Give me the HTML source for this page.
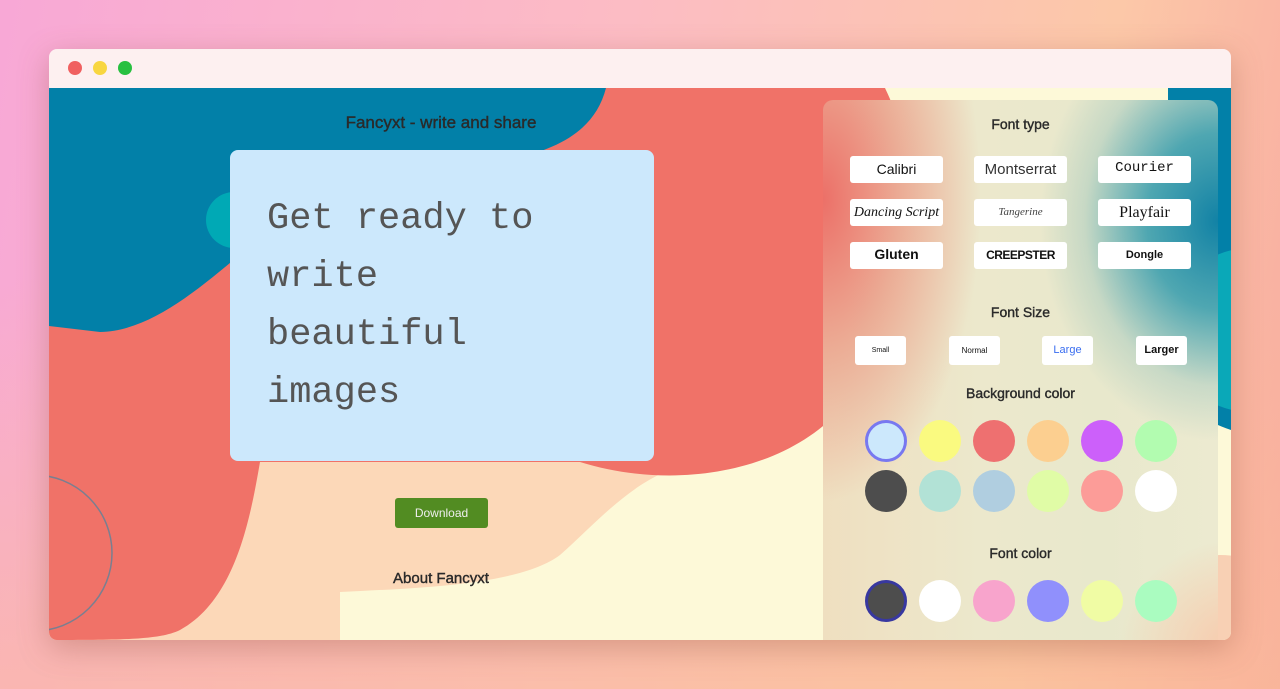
<!DOCTYPE html>
<html><head><meta charset="utf-8"><style>
*{margin:0;padding:0;box-sizing:border-box}
html,body{width:1280px;height:689px;overflow:hidden}
body{position:relative;font-family:"Liberation Sans",sans-serif;
background:linear-gradient(180deg,rgba(252,212,168,0) 0%,rgba(252,200,160,.0) 40%,rgba(250,190,150,.55) 100%),linear-gradient(100deg,#f8a8d6 0%,#fcbcc4 45%,#fcc8a8 80%,#f8aaa0 100%);}
.win{position:absolute;left:49px;top:49px;width:1182px;height:591px;border-radius:8px;overflow:hidden;box-shadow:0 8px 30px rgba(150,80,60,.35)}
.bar{position:absolute;left:0;top:0;width:100%;height:39px;background:#fdf0f0}
.dot{position:absolute;top:12px;width:14px;height:14px;border-radius:50%}
svg.bg{position:absolute;left:0;top:39px}
.t{position:absolute;color:#2a2a2a;text-align:center;-webkit-text-stroke:0.4px #2a2a2a}
.dialog{position:absolute;left:181px;top:101px;width:424px;height:311px;background:#cce8fc;border-radius:8px;padding:40px 0 0 37px;font-family:"Liberation Mono",monospace;font-size:37px;line-height:58px;color:#555}
.dl{position:absolute;left:346px;top:449px;width:93px;height:30px;background:#528c22;color:#eee;font-size:12px;text-align:center;line-height:30px;border-radius:3px}
.panel{position:absolute;left:774px;top:51px;width:395px;height:550px;border-radius:10px;overflow:hidden;
background:
radial-gradient(ellipse 45% 40% at 100% 22%, rgba(18,130,165,1) 0%, rgba(40,150,170,.8) 40%, rgba(120,180,180,.3) 75%, rgba(200,220,200,0) 100%),
radial-gradient(ellipse 40% 55% at 0% 18%, rgba(236,112,104,1) 0%, rgba(234,150,130,.7) 50%, rgba(236,200,170,0) 100%),
radial-gradient(ellipse 30% 20% at 105% 100%, rgba(248,200,170,1) 0%, rgba(248,210,180,0) 100%),
linear-gradient(90deg,#efdfc0 0%,#ece8cc 40%,#e8e8cc 70%,#ecead0 100%);}
.btn{position:absolute;background:#fff;border-radius:3px;text-align:center;color:#111;font-size:15px}
.c{position:absolute;width:42px;height:42px;border-radius:50%}
</style></head><body>
<div class="win">
<svg class="bg" width="1182" height="552" viewBox="49 88 1182 552">
<rect x="49" y="88" width="1182" height="552" fill="#fdf9d8"/>
<path d="M49 88 L700 88 L700 462 C640 470 600 520 560 555 C520 585 420 588 340 592 L340 640 L49 640Z" fill="#fcd8b8"/>
<path d="M49 88 L885 88 C930 180 915 320 840 410 C780 475 670 490 580 462 L260 462 C250 520 235 600 180 630 C160 640 120 640 49 640Z" fill="#f07268"/>
<path d="M49 88 L606 88 C595 130 560 150 500 162 L330 190 C250 230 180 330 100 332 L49 326Z" fill="#0280a8"/>
<circle cx="234" cy="220" r="28" fill="#00a9b5"/>
<circle cx="34" cy="553" r="78" fill="none" stroke="#7a7f90" stroke-width="1.5"/>
<path d="M1168 88 L1231 88 L1231 430 C1200 420 1175 400 1168 360Z" fill="#0280a8"/>
<circle cx="1250" cy="330" r="82" fill="#0aa8b8"/>
<circle cx="1220" cy="650" r="95" fill="#f8d0b4"/>
</svg>
<div class="bar"><div class="dot" style="left:19px;background:#f06060"></div><div class="dot" style="left:44px;background:#f8d640"></div><div class="dot" style="left:69px;background:#28c040"></div></div>
<div class="t" style="left:242px;top:64px;width:300px;font-size:17px">Fancyxt - write and share</div>
<div class="dialog">Get ready to<br>write<br>beautiful<br>images</div>
<div class="dl">Download</div>
<div class="t" style="left:292px;top:521px;width:200px;font-size:15px">About Fancyxt</div>
<div class="panel">
<div class="t" style="left:0;width:395px;top:16px;font-size:14px">Font type</div>
<div class="btn" style="left:27px;top:56px;width:93px;height:27px;line-height:27px;font-size:14px">Calibri</div>
<div class="btn" style="left:151px;top:56px;width:93px;height:27px;line-height:27px;font-size:15px;color:#333">Montserrat</div>
<div class="btn" style="left:275px;top:56px;width:93px;height:27px;line-height:25px;font-family:'Liberation Mono',monospace;font-size:14px">Courier</div>
<div class="btn" style="left:27px;top:99px;width:93px;height:27px;line-height:27px;font-family:'Liberation Serif',serif;font-style:italic;font-size:14px">Dancing Script</div>
<div class="btn" style="left:151px;top:99px;width:93px;height:27px;line-height:27px;font-family:'Liberation Serif',serif;font-style:italic;font-size:11px;color:#444">Tangerine</div>
<div class="btn" style="left:275px;top:99px;width:93px;height:27px;line-height:27px;font-family:'Liberation Serif',serif;font-size:16px">Playfair</div>
<div class="btn" style="left:27px;top:142px;width:93px;height:27px;line-height:25px;font-size:14px;font-weight:bold">Gluten</div>
<div class="btn" style="left:151px;top:142px;width:93px;height:27px;line-height:27px;font-size:12px;font-weight:900;letter-spacing:-.5px">CREEPSTER</div>
<div class="btn" style="left:275px;top:142px;width:93px;height:27px;line-height:27px;font-size:11px;font-weight:bold">Dongle</div>
<div class="t" style="left:0;width:395px;top:204px;font-size:14px">Font Size</div>
<div class="btn" style="left:32px;top:236px;width:51px;height:29px;line-height:29px;font-size:7px">Small</div>
<div class="btn" style="left:126px;top:236px;width:51px;height:29px;line-height:29px;font-size:8px">Normal</div>
<div class="btn" style="left:219px;top:236px;width:51px;height:29px;line-height:29px;font-size:11px;color:#3a6ef0">Large</div>
<div class="btn" style="left:313px;top:236px;width:51px;height:29px;line-height:29px;font-size:11px;font-weight:bold">Larger</div>
<div class="t" style="left:0;width:395px;top:285px;font-size:14px">Background color</div>
<div class="c" style="left:42px;top:320px;background:#cce8fc;border:3px solid #7878f0"></div>
<div class="c" style="left:96px;top:320px;background:#fafa80"></div>
<div class="c" style="left:150px;top:320px;background:#ee7070"></div>
<div class="c" style="left:204px;top:320px;background:#fccf90"></div>
<div class="c" style="left:258px;top:320px;background:#cc60fa"></div>
<div class="c" style="left:312px;top:320px;background:#b2fcb0"></div>
<div class="c" style="left:42px;top:370px;background:#4d4d4d"></div>
<div class="c" style="left:96px;top:370px;background:#b2e2d6"></div>
<div class="c" style="left:150px;top:370px;background:#b0cee0"></div>
<div class="c" style="left:204px;top:370px;background:#e0fca6"></div>
<div class="c" style="left:258px;top:370px;background:#fc9c98"></div>
<div class="c" style="left:312px;top:370px;background:#fff"></div>
<div class="t" style="left:0;width:395px;top:445px;font-size:14px">Font color</div>
<div class="c" style="left:42px;top:480px;background:#4d4d4d;border:3px solid #3838a0"></div>
<div class="c" style="left:96px;top:480px;background:#fff"></div>
<div class="c" style="left:150px;top:480px;background:#f8a4cc"></div>
<div class="c" style="left:204px;top:480px;background:#9090fc"></div>
<div class="c" style="left:258px;top:480px;background:#f0fca4"></div>
<div class="c" style="left:312px;top:480px;background:#aafcc0"></div>
</div>
</div>
</body></html>
